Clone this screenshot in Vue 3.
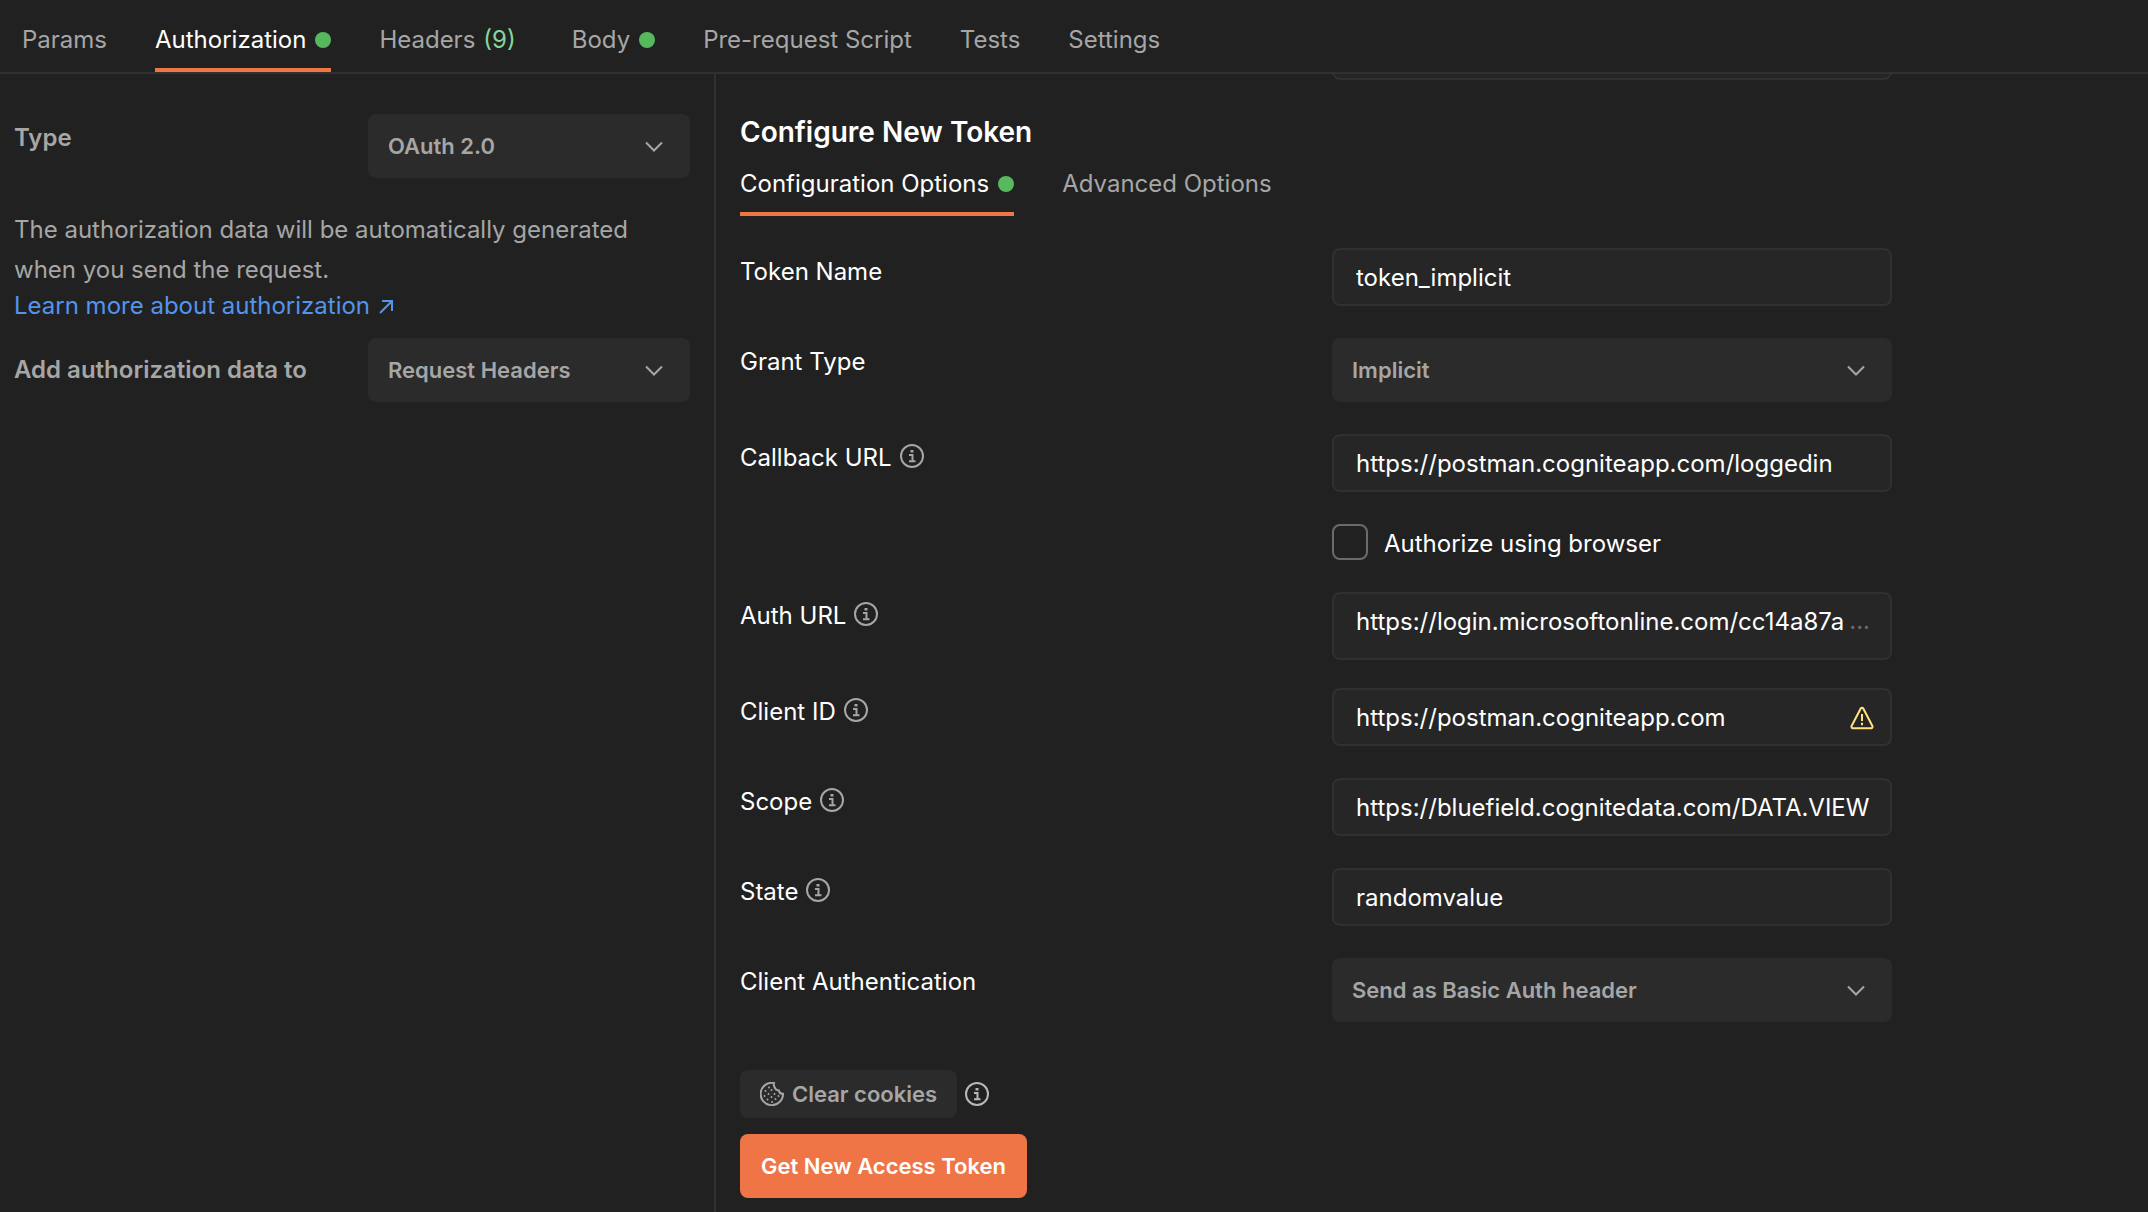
<script setup>
import { ref } from 'vue'

const tabs = [
  { label: 'Params' },
  { label: 'Authorization', dot: true, active: true },
  { label: 'Headers', count: '(9)' },
  { label: 'Body', dot: true },
  { label: 'Pre-request Script' },
  { label: 'Tests' },
  { label: 'Settings' },
]

const optionTabs = [
  { label: 'Configuration Options', dot: true, active: true },
  { label: 'Advanced Options' },
]

const fields = ref([
  { id: 'token-name', label: 'Token Name', kind: 'text', value: 'token_implicit' },
  { id: 'grant-type', label: 'Grant Type', kind: 'select', value: 'Implicit' },
  { id: 'callback-url', label: 'Callback URL', kind: 'text', info: true, value: 'https://postman.cogniteapp.com/loggedin' },
  { id: 'use-browser', label: 'Authorize using browser', kind: 'check', value: false },
  { id: 'auth-url', label: 'Auth URL', kind: 'text', info: true, more: true, value: 'https://login.microsoftonline.com/cc14a87a' },
  { id: 'client-id', label: 'Client ID', kind: 'text', info: true, warn: true, value: 'https://postman.cogniteapp.com' },
  { id: 'scope', label: 'Scope', kind: 'text', info: true, value: 'https://bluefield.cognitedata.com/DATA.VIEW' },
  { id: 'state', label: 'State', kind: 'text', info: true, value: 'randomvalue' },
  { id: 'client-auth', label: 'Client Authentication', kind: 'select', value: 'Send as Basic Auth header' },
])
</script>

<template>
  <div class="page">
    <nav class="tabs top-tabs">
      <button v-for="t in tabs" :key="t.label" type="button" class="tab" :class="{ active: t.active }">
        {{ t.label }}<span v-if="t.count" class="count">{{ t.count }}</span><i v-if="t.dot" class="dot"></i>
      </button>
    </nav>

    <main class="panels">
      <section class="side">
        <div class="side-row">
          <label class="side-label" for="auth-type">Type</label>
          <div class="select-box">
            <select id="auth-type"><option>OAuth 2.0</option></select>
            <svg class="chevron" viewBox="0 0 20 12"><path d="M2 1.5l8 8 8-8" /></svg>
          </div>
        </div>
        <p class="note">The authorization data will be automatically generated when you send the request.</p>
        <a class="link" href="#">Learn more about authorization
          <svg viewBox="0 0 16 16"><path d="M2 15L14 3M4 3h10v10" /></svg>
        </a>
        <div class="side-row middle">
          <label class="side-label" for="add-to">Add authorization data to</label>
          <div class="select-box">
            <select id="add-to"><option>Request Headers</option></select>
            <svg class="chevron" viewBox="0 0 20 12"><path d="M2 1.5l8 8 8-8" /></svg>
          </div>
        </div>
      </section>

      <section class="content">
        <div class="grid">
          <div class="peek"><input class="input" type="text" aria-label="Header prefix" /></div>
        </div>

        <h2 class="heading">Configure New Token</h2>
        <div class="tabs">
          <button v-for="t in optionTabs" :key="t.label" type="button" class="tab" :class="{ active: t.active }">
            {{ t.label }}<i v-if="t.dot" class="dot"></i>
          </button>
        </div>

        <form class="form" @submit.prevent>
          <div v-for="f in fields" :key="f.id" class="grid" :class="{ tall: f.more }">
            <label v-if="f.kind !== 'check'" class="label" :for="f.id">
              {{ f.label }}
              <svg v-if="f.info" class="info" viewBox="0 0 24 24">
                <circle cx="12" cy="12" r="11" />
                <path d="M9 11h3.500v6M9 17.200h6.500" />
                <rect x="10.500" y="6" width="3" height="2.500" />
              </svg>
            </label>

            <div v-if="f.kind === 'text'" class="input-box">
              <input :id="f.id" v-model="f.value" class="input" type="text" />
              <span v-if="f.more" class="more">...</span>
              <svg v-if="f.warn" class="warn" viewBox="0 0 24 24">
                <path d="M10.700 2.500L1.600 20a1.500 1.500 0 0 0 1.300 2.200h18.200a1.500 1.500 0 0 0 1.300-2.200L13.300 2.500a1.500 1.500 0 0 0-2.600 0z" />
                <path d="M12 8v7M12 16.800v2.400" />
              </svg>
            </div>

            <div v-else-if="f.kind === 'select'" class="select-box">
              <select :id="f.id"><option>{{ f.value }}</option></select>
              <svg class="chevron" viewBox="0 0 20 12"><path d="M2 1.500l8 8 8-8" /></svg>
            </div>

            <label v-else class="check">
              <input v-model="f.value" type="checkbox" />
              <span>{{ f.label }}</span>
            </label>
          </div>
        </form>

        <div class="actions">
          <button type="button" class="btn clear">
            <svg class="cookie" viewBox="0 0 24 24">
              <path d="M14 1A11.200 11.200 0 1 0 23 11.800a4 4 0 0 1-4.200-3.300A4.800 4.800 0 0 1 14.500 5 5 5 0 0 1 14 1z" />
              <g>
                <circle cx="9" cy="5.500" r="1" /><circle cx="5.500" cy="9" r="1" /><circle cx="11.500" cy="8" r="1" />
                <circle cx="8.500" cy="12" r="1" /><circle cx="4.500" cy="14" r="1" /><circle cx="14.500" cy="12" r="1" />
                <circle cx="11.500" cy="15" r="1" /><circle cx="18.500" cy="14" r="1" /><circle cx="7.500" cy="17.500" r="1" />
                <circle cx="15.500" cy="17" r="1" /><circle cx="12" cy="20" r="1" />
              </g>
            </svg>
            Clear cookies
          </button>
          <svg class="info bright" viewBox="0 0 24 24">
            <circle cx="12" cy="12" r="11" />
            <path d="M9 11h3.500v6M9 17.200h6.500" />
            <rect x="10.500" y="6" width="3" height="2.500" />
          </svg>
        </div>
        <button type="button" class="btn primary">Get New Access Token</button>
      </section>
    </main>
  </div>
</template>

<style>
body {
  background: #212121;
}
</style>

<style scoped>
.page {
  display: flex;
  flex-direction: column;
  min-height: 100vh;
  background: #212121;
  color: #fff;
  font-family: Inter, "Liberation Sans", sans-serif;
  font-size: 24px;
}
.page *,
.page {
  box-sizing: border-box;
}
button,
input,
select {
  margin: 0;
  font: inherit;
  color: inherit;
  border: 0;
  outline: 0;
}
svg {
  flex: none;
  fill: none;
  stroke: currentColor;
}

.tabs {
  display: flex;
  gap: 48px;
}
.top-tabs {
  padding: 8px 22px 0;
  border-bottom: 2px solid #303030;
}
.tab {
  display: flex;
  align-items: center;
  padding: 12px 0 8px;
  line-height: 40px;
  color: #a6a6a6;
  background: none;
  border-bottom: 4px solid transparent;
  white-space: nowrap;
}
.tab.active {
  color: #fff;
  border-bottom-color: #ef7547;
}
.dot {
  width: 16px;
  height: 16px;
  margin-left: 9px;
  border-radius: 50%;
  background: #58b85e;
}
.count {
  margin: 0 8px;
  color: #82d79a;
}

.panels {
  display: flex;
  flex: 1;
}
.side {
  flex: 0 0 calc(100% / 3);
  padding: 40px 24px 0 14px;
  border-right: 2px solid #303030;
  color: #a6a6a6;
}
.side-row {
  display: flex;
  justify-content: space-between;
}
.side-row .select-box {
  width: 322px;
}
.middle {
  align-items: center;
}
.side-label {
  font-weight: 600;
  line-height: 40px;
  padding-top: 4px;
}
.middle .side-label {
  padding: 0;
}
.note {
  max-width: 640px;
  margin: 32px 0 0;
  line-height: 40px;
}
.link {
  display: flex;
  align-items: center;
  gap: 8px;
  margin-bottom: 16px;
  line-height: 32px;
  color: #5394ee;
  text-decoration: none;
}
.link svg {
  width: 16px;
  height: 16px;
  stroke-width: 2;
}

.select-box,
.input-box {
  position: relative;
}
select {
  display: block;
  width: 100%;
  height: 64px;
  padding: 0 56px 0 20px;
  border-radius: 8px;
  appearance: none;
  background: #2b2b2b;
  color: #a6a6a6;
  font-size: 22px;
  font-weight: 600;
}
.chevron {
  position: absolute;
  top: 27px;
  right: 26px;
  width: 20px;
  height: 12px;
  stroke: #a6a6a6;
  stroke-width: 2;
  pointer-events: none;
}

.content {
  flex: 1;
  min-width: 0;
  padding: 0 24px 14px;
}
.grid {
  display: grid;
  grid-template-columns: minmax(0, 592px) minmax(0, 560px);
  align-items: start;
}
.grid > :last-child {
  grid-column: 2;
}
.peek {
  display: flex;
  align-items: flex-end;
  height: 6px;
  overflow: hidden;
}
.heading {
  margin: 32px 0 0;
  font-size: 28px;
  font-weight: 600;
  line-height: 40px;
}
.form {
  display: flex;
  flex-direction: column;
  gap: 32px;
  margin-top: 32px;
}
.label {
  display: flex;
  align-items: center;
  gap: 8px;
  padding-top: 4px;
  line-height: 40px;
}
.info {
  width: 24px;
  height: 24px;
  color: #a6a6a6;
  stroke-width: 2;
}
.label .info {
  margin-bottom: 4px;
}
.info rect {
  fill: currentColor;
  stroke: none;
}
.info.bright {
  color: #b8b8b8;
}
.input {
  display: block;
  flex: none;
  width: 100%;
  height: 58px;
  padding: 0 16px 0 22px;
  border: 2px solid #303030;
  border-radius: 8px;
  background: #262626;
  color: #fff;
}
.tall {
  margin-bottom: -4px;
}
.tall .input {
  height: 68px;
  padding-bottom: 10px;
}
.more {
  position: absolute;
  top: 14px;
  right: 22px;
  color: #6b6b6b;
  line-height: 30px;
}
.warn {
  position: absolute;
  top: 18px;
  right: 18px;
  width: 24px;
  height: 24px;
  stroke: #ffe47e;
  stroke-width: 2;
}
.check {
  display: flex;
  align-items: center;
  gap: 16px;
}
.check input {
  width: 36px;
  height: 36px;
  border: 2px solid #6b6b6b;
  border-radius: 8px;
  appearance: none;
}
.check input:checked {
  background: #ef7547;
}
.check span {
  padding-top: 4px;
  line-height: 32px;
}

.actions {
  display: flex;
  align-items: center;
  gap: 8px;
  margin-top: 48px;
}
.btn {
  display: flex;
  align-items: center;
  border-radius: 8px;
  font-size: 22px;
  font-weight: 600;
  white-space: nowrap;
}
.clear {
  gap: 8px;
  height: 48px;
  padding: 0 20px;
  background: #2b2b2b;
  color: #a6a6a6;
}
.cookie {
  width: 24px;
  height: 24px;
  stroke-width: 2;
}
.cookie g {
  fill: currentColor;
  stroke: none;
}
.primary {
  height: 64px;
  margin-top: 16px;
  padding: 0 21px;
  background: #ef7547;
  color: #fff;
}
</style>
